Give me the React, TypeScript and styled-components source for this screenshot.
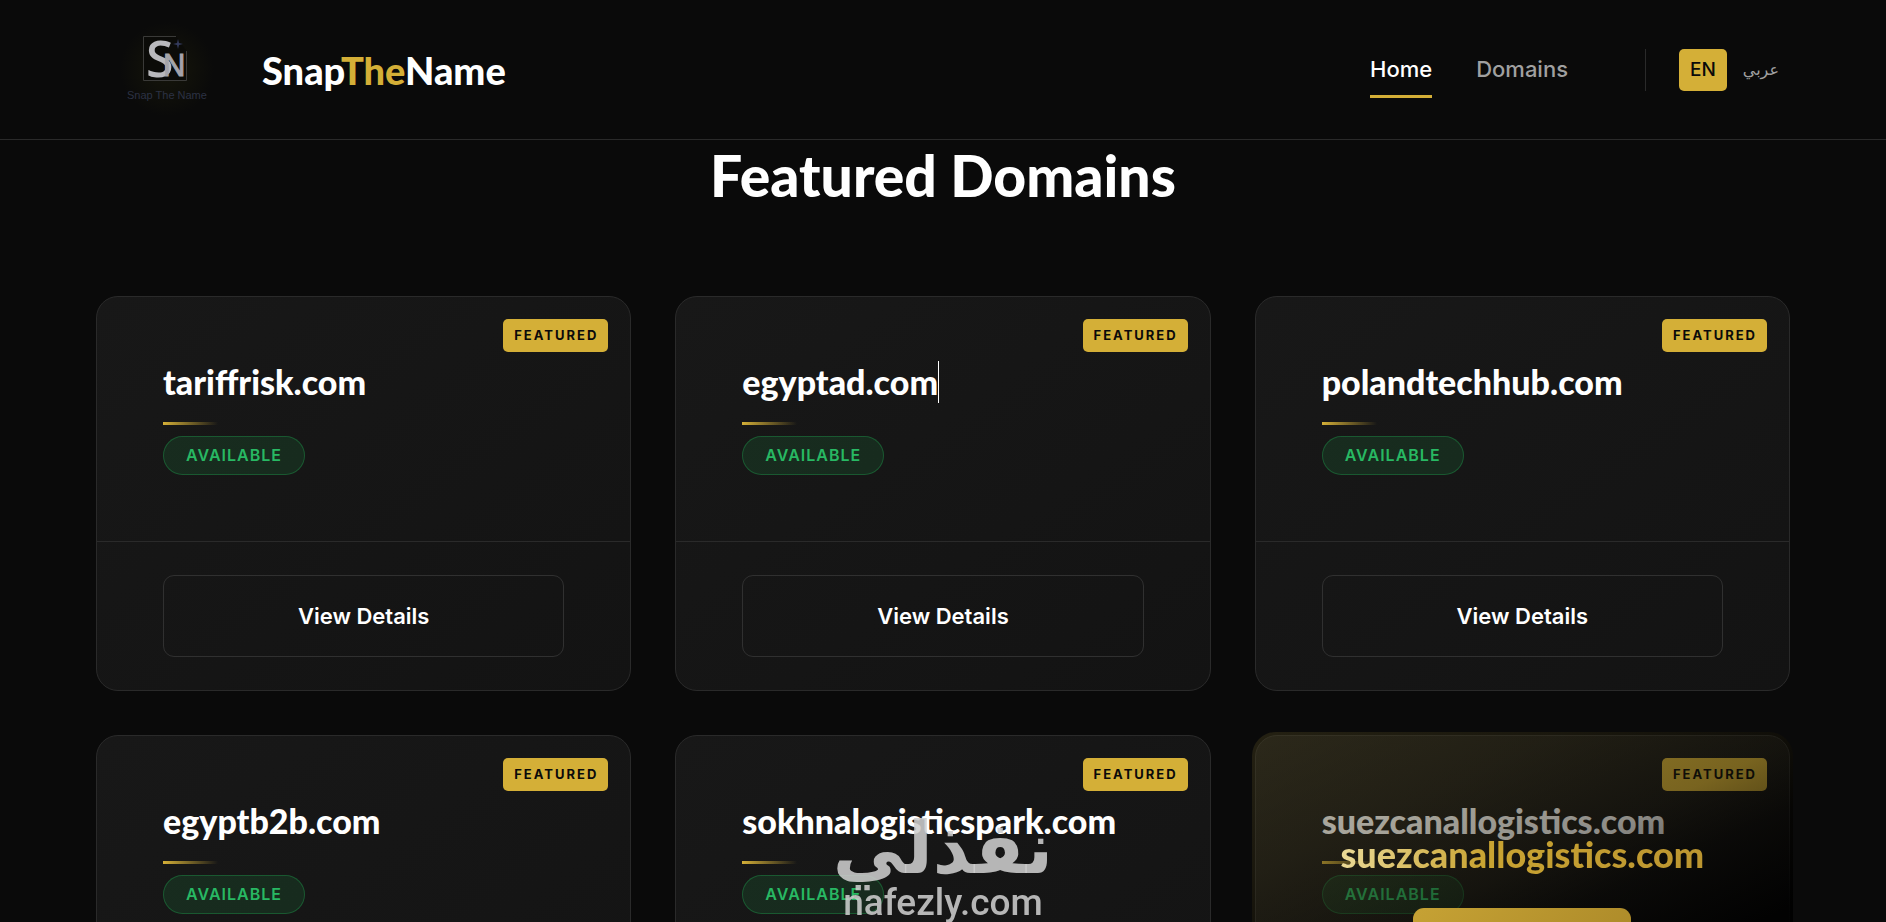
import React from "react";
import styled, { createGlobalStyle, css } from "styled-components";

const gold = "#d4af37";
const display = `Lato, "Open Sans", sans-serif`;
const body = `Inter, "Liberation Sans", sans-serif`;

const GlobalStyle = createGlobalStyle`
  *, *::before, *::after { box-sizing: border-box; }
  html { scrollbar-width: none; }
  body { margin: 0; background: #0a0a0a; color: #fff; font-family: ${body}; }
  h1, h2, h3, p { margin: 0; }
`;

const Page = styled.div`
  min-height: 100vh;
  overflow: clip;
`;

const Header = styled.header`
  position: sticky;
  top: 0;
  z-index: 5;
  display: flex;
  align-items: center;
  justify-content: space-between;
  height: 140px;
  padding: 0 96px;
  background: #0a0a0a;
  border-bottom: 1px solid #2a2a2a;
`;

const Brand = styled.a`
  display: flex;
  align-items: center;
  gap: 22px;
  color: #fff;
  text-decoration: none;
`;

const BrandName = styled.span`
  font: 900 38px/44px ${display};
`;

const Accent = styled.span`
  color: ${gold};
`;

const Nav = styled.nav`
  display: flex;
  align-items: center;
  gap: 44px;
`;

const NavLink = styled.a<{ $active?: boolean }>`
  padding: 10px 0 12px;
  font-size: 22px;
  font-weight: 500;
  line-height: 34px;
  text-decoration: none;
  color: ${(p) => (p.$active ? "#fff" : "#a0a0a0")};
  box-shadow: ${(p) => (p.$active ? `inset 0 -3px 0 ${gold}` : "none")};
`;

const LangSwitch = styled.div`
  display: flex;
  gap: 5px;
  margin-left: 33px;
  padding-left: 33px;
  border-left: 1px solid #2a2a2a;
`;

const LangButton = styled.button<{ $active?: boolean }>`
  height: 42px;
  padding: 0 11px;
  border: 0;
  border-radius: 5px;
  font: 500 19px/28px Inter, sans-serif;
  color: ${(p) => (p.$active ? "#0a0a0a" : "#a0a0a0")};
  background: ${(p) => (p.$active ? gold : "transparent")};

  &:lang(ar) {
    font: 400 16px/28px "DejaVu Sans", sans-serif;
  }
`;

const Main = styled.main`
  padding: 2px 96px 96px;
`;

const Title = styled.h2`
  margin-bottom: 88px;
  text-align: center;
  font: 900 57px/66px ${display};
`;

const Grid = styled.div`
  display: grid;
  grid-template-columns: repeat(3, minmax(0, 1fr));
  gap: 44px;
`;

const CardBox = styled.article`
  position: relative;
  border: 1px solid #2a2a2a;
  border-radius: 22px;
  background: linear-gradient(145deg, #181818, #131313);
`;

const CardBody = styled.div`
  display: flex;
  flex-direction: column;
  align-items: flex-start;
  padding: 64px 66px 66px;
`;

const Featured = styled.span`
  position: absolute;
  top: 22px;
  right: 22px;
  padding: 0 10px 0 11px;
  border-radius: 5px;
  background: ${gold};
  color: #0a0a0a;
  font-size: 13px;
  font-weight: 700;
  line-height: 33px;
  letter-spacing: 2px;
`;

const domainText = css`
  font: 900 34px/42px ${display};
  white-space: nowrap;
`;

const DomainName = styled.h3<{ $caret?: boolean }>`
  ${domainText}
  border-right: ${(p) => (p.$caret ? "1px solid #fff" : "0")};
`;

const Rule = styled.div`
  width: 55px;
  height: 3px;
  margin: 19px 0 11px;
  background: linear-gradient(90deg, ${gold}, transparent);
`;

const Status = styled.span`
  padding: 0 22px;
  border: 1px solid rgba(34, 197, 94, 0.3);
  border-radius: 20px;
  background: rgba(34, 197, 94, 0.12);
  color: #28b863;
  font-size: 16px;
  font-weight: 600;
  line-height: 37px;
  letter-spacing: 1px;
`;

const CardFooter = styled.div`
  padding: 33px 66px;
  border-top: 1px solid #2a2a2a;
`;

const DetailsButton = styled.button`
  width: 100%;
  height: 82px;
  border: 1px solid #303030;
  border-radius: 11px;
  background: transparent;
  color: #fff;
  font: 600 22px/34px ${body};
`;

const Overlay = styled.div`
  position: absolute;
  inset: -4px;
  display: flex;
  flex-direction: column;
  align-items: center;
  gap: 33px;
  padding-top: 101px;
  border-radius: 24px;
  background: linear-gradient(
    155deg,
    rgba(72, 64, 30, 0.42) 0%,
    rgba(48, 42, 18, 0.42) 22%,
    rgba(20, 17, 6, 0.48) 40%,
    rgba(4, 3, 0, 0.62) 50%,
    rgba(0, 0, 0, 0.92) 66%
  );
`;

const OverlayName = styled.p`
  ${domainText}
  font-size: 36px;
  background: linear-gradient(100deg, #ecdc9a, #c9a432 40%, #bb9530);
  background-clip: text;
  color: transparent;
`;

const OverlayButton = styled.button`
  width: 218px;
  height: 66px;
  border: 0;
  border-radius: 11px;
  background: linear-gradient(135deg, #c6a234, #a98728);
  color: #0a0a0a;
  font: 600 22px/34px ${body};
`;

const Watermark = styled.div`
  position: fixed;
  left: 0;
  right: 0;
  bottom: 0;
  z-index: 6;
  display: flex;
  flex-direction: column;
  align-items: center;
  color: rgba(205, 205, 205, 0.88);
  pointer-events: none;
`;

const WatermarkArabic = styled.span`
  font: 700 72px/72px "DejaVu Sans", sans-serif;
`;

const WatermarkLatin = styled.span`
  font: 500 37px/38px Roboto, sans-serif;
`;

function Logo() {
  return (
    <svg width="144" height="96" viewBox="0 0 144 96" role="img" aria-label="Snap The Name logo">
      <defs>
        <radialGradient id="glow">
          <stop offset="0" stopColor="#16160a" />
          <stop offset="1" stopColor="#0a0a0a" />
        </radialGradient>
      </defs>
      <rect x="24" y="0" width="94" height="94" fill="url(#glow)" />
      <path d="M80 14.5H47.500V58.500H90.500V29" fill="#0b0b08" stroke="#3a3a38" />
      <text x="50" y="55" fontFamily="Open Sans" fontSize="50" fontWeight="600" fill="#b9b9bd">S</text>
      <text x="67" y="54" fontFamily="Liberation Sans" fontSize="31" fill="#a4a4aa" stroke="#a4a4aa">N</text>
      <path d="M82 17l1 4 4 1-4 1-1 4-1-4-4-1 4-1z" fill="#343b5c" />
      <text x="31" y="77" fontFamily="Liberation Sans" fontSize="11" fill="#2c3244">Snap The Name</text>
    </svg>
  );
}

type Domain = { name: string; caret?: boolean; hovered?: boolean };

const domains: Domain[] = [
  { name: "tariffrisk.com" },
  { name: "egyptad.com", caret: true },
  { name: "polandtechhub.com" },
  { name: "egyptb2b.com" },
  { name: "sokhnalogisticspark.com" },
  { name: "suezcanallogistics.com", hovered: true },
];

function DomainCard({ name, caret, hovered }: Domain) {
  return (
    <CardBox>
      <CardBody>
        <Featured>FEATURED</Featured>
        <DomainName $caret={caret}>{name}</DomainName>
        <Rule />
        <Status>AVAILABLE</Status>
      </CardBody>
      <CardFooter>
        <DetailsButton type="button">View Details</DetailsButton>
      </CardFooter>
      {hovered && (
        <Overlay>
          <OverlayName>{name}</OverlayName>
          <OverlayButton type="button">View Details</OverlayButton>
        </Overlay>
      )}
    </CardBox>
  );
}

export default function App() {
  return (
    <Page>
      <GlobalStyle />
      <Header>
        <Brand href="#home">
          <Logo />
          <BrandName>
            Snap<Accent>The</Accent>Name
          </BrandName>
        </Brand>
        <Nav>
          <NavLink href="#home" $active>Home</NavLink>
          <NavLink href="#domains">Domains</NavLink>
          <LangSwitch>
            <LangButton type="button" $active>EN</LangButton>
            <LangButton type="button" lang="ar">عربي</LangButton>
          </LangSwitch>
        </Nav>
      </Header>
      <Main>
        <Title>Featured Domains</Title>
        <Grid>
          {domains.map((d) => (
            <DomainCard key={d.name} {...d} />
          ))}
        </Grid>
      </Main>
      <Watermark>
        <WatermarkArabic lang="ar">نفذلي</WatermarkArabic>
        <WatermarkLatin>nafezly.com</WatermarkLatin>
      </Watermark>
    </Page>
  );
}
